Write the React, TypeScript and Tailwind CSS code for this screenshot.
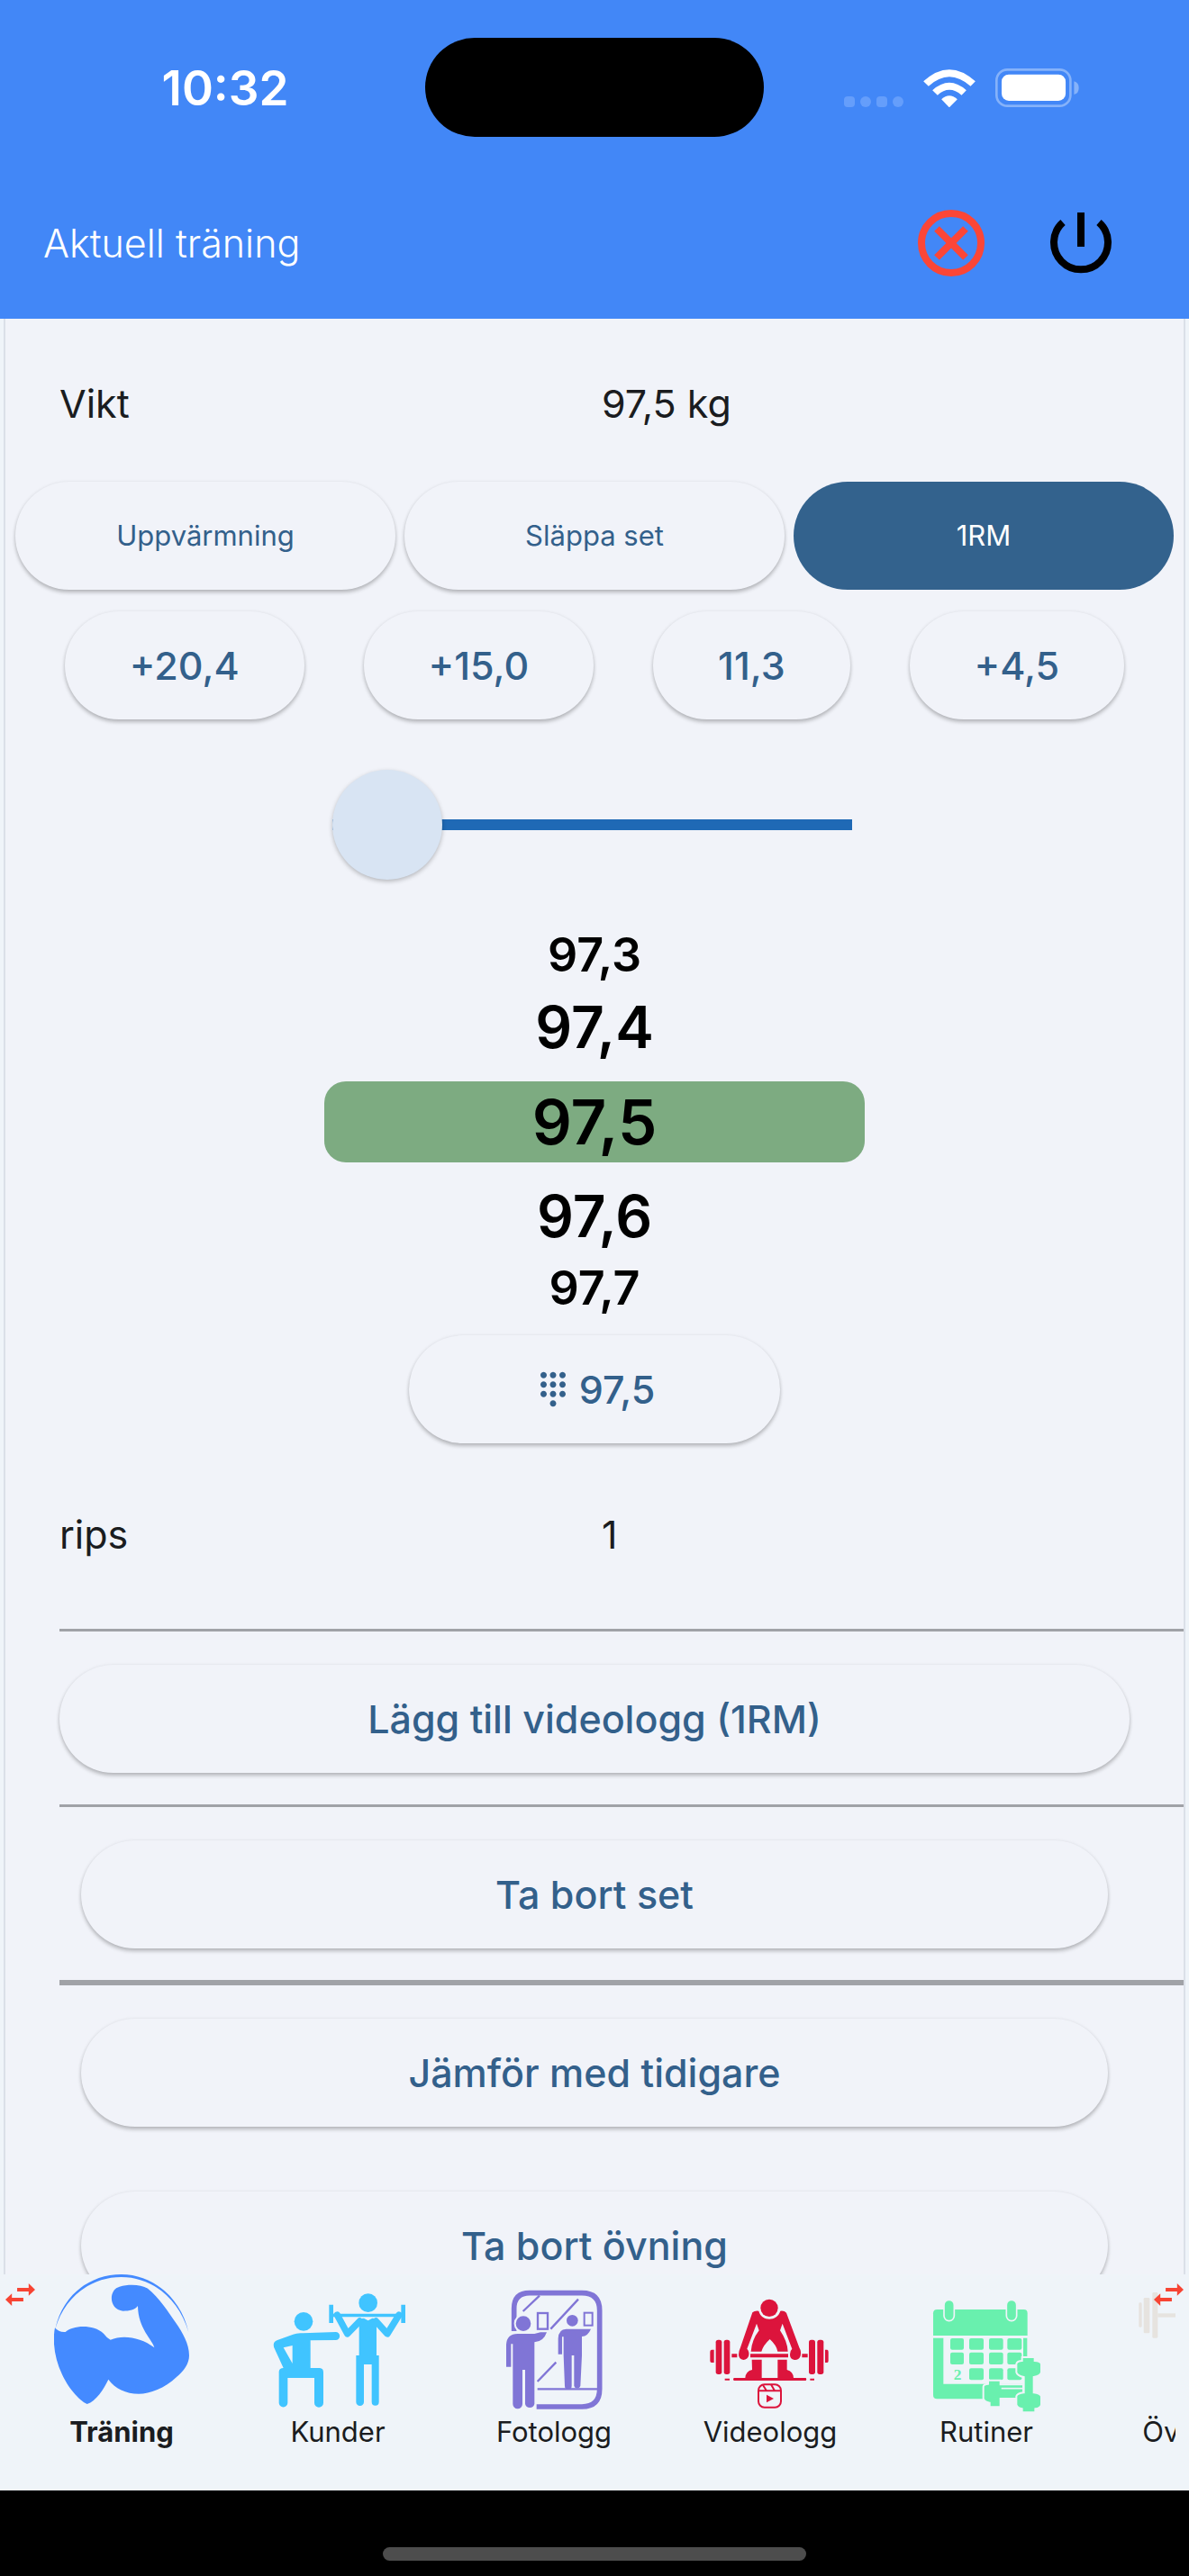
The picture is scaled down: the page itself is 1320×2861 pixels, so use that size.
import React, { useState } from "react";
import clsx from "clsx";
import { MdDialpad } from "react-icons/md";

const WifiIcon = () => (
  <svg viewBox="434 105 173 126" className="h-[42px] w-[58px]" fill="#fff">
    <path d="M434 145 Q520 66 607 145 L591 161 Q520 98 451 161 Z" />
    <path d="M464 175 Q520 124 577 175 L561 191 Q520 156 481 191 Z" />
    <path d="M494 205 Q520 181 547 205 L520 232 Z" />
  </svg>
);

const BatteryIcon = () => (
  <svg viewBox="675 105 280 129" className="h-[43px] w-[93px]">
    <rect x="679" y="109" width="247" height="121" rx="36" fill="none" stroke="#85b2fa" strokeWidth="8" />
    <rect x="696" y="125" width="214" height="88" rx="24" fill="#fff" />
    <path d="M938 148 Q954 152 954 170 Q954 188 938 192 Z" fill="#85b2fa" />
  </svg>
);

const CancelIcon = () => (
  <svg viewBox="0 0 76 76" className="size-[76px]" fill="none" stroke="#fb4637" strokeWidth="8">
    <circle cx="38" cy="38" r="33" />
    <path d="M22 22 L54 54 M54 22 L22 54" />
  </svg>
);

const PowerIcon = () => (
  <svg viewBox="0 0 76 76" className="size-[76px]" fill="none" stroke="#000" strokeWidth="8">
    <path d="M18 15 A30 30 0 1 0 58 15" />
    <path d="M38 4 V42" />
  </svg>
);

const SwapArrowsIcon = () => (
  <svg viewBox="17 137 101 76" className="h-[25px] w-[33px]" fill="#f74433">
    <path d="M57 152 H96 V137 L118 158 L96 179 V164 H57 Z" />
    <path d="M78 186 H39 V171 L17 192 L39 213 V198 H78 Z" />
  </svg>
);

const TrainingIcon = () => (
  <svg viewBox="180 108 450 450" className="size-[150px]" fill="#448aff">
    <path d="M184 290 C208 176 300 108 404 108 C510 108 602 186 628 300 C596 190 508 117 404 117 C302 117 214 184 184 290 Z" />
    <path d="M183 286 Q196 302 218 300 C240 278 310 272 345 305 Q356 320 368 326 C410 308 470 318 514 352 C508 325 460 290 459 213 C450 226 430 230 410 230 C360 225 362 158 398 149 C430 140 470 142 492 155 C530 185 560 232 586 270 C608 302 630 340 630 378 C630 406 612 430 588 450 C548 488 500 506 462 506 C420 506 382 488 361 458 C346 490 320 530 290 540 C262 528 225 482 207 442 C182 390 174 330 183 286 Z" />
  </svg>
);

const ClientsIcon = () => (
  <svg viewBox="900 108 450 450" className="size-[150px]" fill="#40c4ff">
    <circle cx="1011" cy="265" r="31" />
    <path d="M976 308 Q990 302 1010 304 L1118 300 A13 13 0 0 1 1118 327 L1034 328 V420 H1065 Q1077 421 1077 434 V536 A14 14 0 0 1 1047 536 V453 H958 V536 A14 14 0 0 1 929 536 V432 Q930 420 944 420 L912 350 Q908 334 922 328 Z M974 345 L944 352 L974 405 Z" fillRule="evenodd" />
    <circle cx="1226" cy="203" r="31" />
    <path d="M1096 209 H1110 V270 H1096 Z M1336 209 H1350 V270 H1336 Z M1110 239 H1336 V250 H1110 Z" />
    <path d="M1123 243 L1157 306 L1198 264 M1329 243 L1290 306 L1252 264" fill="none" stroke="#40c4ff" strokeWidth="22" strokeLinecap="round" strokeLinejoin="round" />
    <path d="M1188 264 Q1196 255 1212 254 L1226 262 L1240 254 Q1254 255 1260 264 L1254 280 V378 H1262 V533 A12 12 0 0 1 1238 533 V408 H1212 V533 A12 12 0 0 1 1186 533 V378 H1196 V280 Z" />
  </svg>
);

const PhotoLogIcon = () => (
  <svg viewBox="120 108 450 450" className="size-[150px]" fill="#8075d6">
    <path d="M212 297 V222 Q212 170 264 170 H438 Q497 170 497 228 V490 Q497 549 438 549 H287" fill="none" stroke="#8075d6" strokeWidth="17" />
    <path d="M242 231 L297 179 M334 290 L426 191 M290 465 L352 401 M290 490 H490" fill="none" stroke="#8075d6" strokeWidth="7" />
    <circle cx="243" cy="272" r="28" stroke="#eff4f9" strokeWidth="6" />
    <path d="M186 416 V342 Q188 306 224 306 H280 L300 301 L321 301 Q310 333 280 334 V540 A16 16 0 0 1 249 540 V426 H240 V540 A16 16 0 0 1 208 540 V340 H202 V416 Z" />
    <rect x="291" y="237" width="33" height="53" fill="none" stroke="#8075d6" strokeWidth="7" />
    <circle cx="406" cy="262" r="19" />
    <path d="M359 374 V322 Q360 290 386 290 H468 Q458 314 438 315 V378 L433 480 A11 11 0 0 1 412 480 V378 H404 V480 A11 11 0 0 1 381 480 L377 378 V316 H372 V374 Z" />
    <rect x="446" y="236" width="27" height="42" fill="none" stroke="#8075d6" strokeWidth="6" />
  </svg>
);

const VideoLogIcon = () => (
  <svg viewBox="840 108 450 450" className="size-[150px]" fill="#dc143c">
    <circle cx="1062" cy="220" r="29" />
    <path d="M1006 235 Q1014 228 1027 230 C1036 266 1088 266 1099 230 Q1112 228 1119 236 L1162 352 Q1170 366 1166 380 Q1160 394 1146 393 Q1130 390 1131 374 Q1131 362 1138 356 L1106 272 L1098 295 Q1122 330 1124 365 H1090 Q1086 344 1064 324 Q1042 344 1036 365 H1001 Q1004 326 1028 295 L1020 272 L988 356 Q996 364 994 378 Q990 392 976 393 Q960 390 960 376 Q960 364 966 352 Z" />
    <path d="M999 373 H1125 V385 H999 Z M937 373 H955 V385 H937 Z M1171 373 H1190 V385 H1171 Z" />
    <rect x="884" y="326" width="20" height="115" rx="8" />
    <rect x="911" y="326" width="20" height="115" rx="8" />
    <rect x="1194" y="326" width="21" height="115" rx="8" />
    <rect x="1222" y="326" width="21" height="115" rx="8" />
    <path d="M878 359 H870 Q865 360 865 366 V396 Q865 402 870 402 H878 Z M1248 359 H1255 Q1259 360 1259 366 V396 Q1259 402 1255 402 H1248 Z" />
    <path d="M1004 392 H1037 V453 H1090 V392 H1121 V426 Q1142 432 1143 453 H1184 Q1188 458 1184 462 H944 Q940 457 944 453 H982 Q984 430 1005 426 Z" />
    <path d="M914 455 H930 V461 H914 Z M1198 455 H1212 V461 H1198 Z" />
    <rect x="1026" y="475" width="75" height="76" rx="20" fill="none" stroke="#dc143c" strokeWidth="6" />
    <path d="M1026 496 H1101 M1041 477 L1053 496 M1068 475 L1080 496" fill="none" stroke="#dc143c" strokeWidth="6" />
    <path d="M1053 509 L1077 522 L1053 535 Z" />
  </svg>
);

const RoutinesIcon = () => (
  <svg viewBox="180 108 450 450" className="size-[150px] overflow-visible" fill="#69f0ae">
    <path d="M228 238 Q228 225 241 225 H530 Q542 225 542 238 V312 H228 Z" />
    <path d="M228 320 H262 V473 H542 V523 H241 Q228 523 228 510 Z M528 320 H541 V400 H528 Z" />
    <rect x="264" y="193" width="34" height="70" rx="17" stroke="#eff4f9" strokeWidth="5" />
    <rect x="472" y="193" width="34" height="70" rx="17" stroke="#eff4f9" strokeWidth="5" />
    <rect x="285" y="321" width="45" height="38" rx="6" />
    <rect x="348" y="321" width="48" height="38" rx="6" />
    <rect x="414" y="321" width="47" height="38" rx="6" />
    <rect x="475" y="321" width="48" height="38" rx="6" />
    <rect x="285" y="368" width="45" height="40" rx="6" />
    <rect x="348" y="368" width="48" height="40" rx="6" />
    <rect x="414" y="368" width="47" height="40" rx="6" />
    <rect x="475" y="368" width="48" height="40" rx="6" />
    <rect x="348" y="421" width="48" height="39" rx="6" />
    <rect x="414" y="421" width="47" height="39" rx="6" />
    <rect x="475" y="421" width="48" height="39" rx="6" />
    <text x="296" y="460" fontSize="52" fontWeight="700" className="font-['Liberation_Serif',serif]">2</text>
    <path d="M395 482 Q395 474 411 473 V461 H452 V475 H528 V522 H452 V550 H416 V536 Q398 532 395 522 Z" stroke="#eff4f9" strokeWidth="6" />
    <path d="M455 488 H528" stroke="#eff4f9" strokeWidth="5" />
    <path d="M524 384 H566 V396 Q584 396 588 406 V434 Q586 446 563 450 V502 Q584 504 588 514 V542 Q586 554 568 556 V568 H524 V556 Q508 552 505 542 V514 Q508 504 530 502 V450 Q508 446 505 434 V406 Q508 396 524 396 Z" stroke="#eff4f9" strokeWidth="6" />
  </svg>
);

const ExercisesIcon = () => (
  <svg viewBox="900 108 450 450" className="size-[150px]" fill="#e6e3df">
    <rect x="913" y="202" width="10" height="82" rx="4" />
    <rect x="929" y="186" width="20" height="118" rx="4" />
    <rect x="958" y="168" width="18" height="152" rx="4" />
    <rect x="976" y="238" width="298" height="13" />
    <rect x="1274" y="168" width="18" height="152" rx="4" />
    <rect x="1301" y="186" width="20" height="118" rx="4" />
    <rect x="1327" y="202" width="10" height="82" rx="4" />
  </svg>
);

const tabs = [
  { label: "Träning", Icon: TrainingIcon },
  { label: "Kunder", Icon: ClientsIcon },
  { label: "Fotologg", Icon: PhotoLogIcon },
  { label: "Videologg", Icon: VideoLogIcon },
  { label: "Rutiner", Icon: RoutinesIcon },
  { label: "Övningar", Icon: ExercisesIcon },
];

const setTypes = ["Uppvärmning", "Släppa set", "1RM"];
const increments = ["+20,4", "+15,0", "11,3", "+4,5"];

const PillButton: React.FC<React.ButtonHTMLAttributes<HTMLButtonElement> & { filled?: boolean }> = ({
  filled,
  className,
  ...props
}) => (
  <button
    type="button"
    className={clsx(
      "flex h-[120px] shrink-0 items-center justify-center rounded-full whitespace-nowrap",
      filled
        ? "bg-[#33628d] text-white"
        : "bg-[#f1f3f9] text-[#33608b] shadow-[0_3px_4px_rgba(0,0,0,0.24),0_0_4px_rgba(0,0,0,0.06)]",
      className,
    )}
    {...props}
  />
);

const ValueRow: React.FC<{ label: string; value: string; className?: string }> = ({
  label,
  value,
  className,
}) => (
  <dl className={clsx("grid shrink-0 grid-cols-2 gap-x-4 px-[60px] text-[43px] leading-[60px]", className)}>
    <dt>{label}</dt>
    <dd>{value}</dd>
  </dl>
);

const App: React.FC = () => {
  const [setType, setSetType] = useState("1RM");
  const [activeTab, setActiveTab] = useState("Träning");
  const [offset, setOffset] = useState(0);

  return (
    <div className="flex h-screen flex-col overflow-hidden bg-[#eff4f9] font-['Inter',sans-serif] text-[#1a1c20]">
      <header className="shrink-0 bg-[#4287f7] text-white">
        <div className="grid h-[194px] grid-cols-[1fr_376px_1fr] items-center">
          <time className="pt-1 pl-7 text-center text-[53px] font-semibold">10:32</time>
          <div className="h-[110px] rounded-full bg-black" />
          <div className="flex items-end justify-center gap-[22px] pr-[33px]">
            <div className="flex gap-[6px]">
              <span className="size-3 rounded-sm bg-[#659efb]" />
              <span className="size-3 rounded-full bg-[#659efb]" />
              <span className="size-3 rounded-sm bg-[#659efb]" />
              <span className="size-3 rounded-full bg-[#659efb]" />
            </div>
            <WifiIcon />
            <BatteryIcon />
          </div>
        </div>
        <div className="flex h-[160px] items-center justify-between pr-[82px] pb-2 pl-12">
          <h1 className="text-[43px] font-light">Aktuell träning</h1>
          <div className="flex gap-[68px]">
            <button type="button" aria-label="Avbryt">
              <CancelIcon />
            </button>
            <button type="button" aria-label="Avsluta">
              <PowerIcon />
            </button>
          </div>
        </div>
      </header>

      <main className="mx-1 flex min-h-0 flex-1 flex-col overflow-hidden border-x-2 border-[#dbe0e8] bg-[#f1f3f9]">
        <ValueRow label="Vikt" value="97,5 kg" className="pt-16 pb-[57px]" />

        <div className="flex shrink-0 gap-[10px] px-[11px]">
          {setTypes.map((type) => (
            <PillButton
              key={type}
              filled={type === setType}
              onClick={() => setSetType(type)}
              className="flex-1 text-[31px]"
            >
              {type}
            </PillButton>
          ))}
        </div>
        <div className="mt-6 flex shrink-0 justify-evenly">
          {increments.map((step) => (
            <PillButton key={step} className="px-[72px] text-[43px] font-medium">
              {step}
            </PillButton>
          ))}
        </div>

        <div className="mt-14 flex shrink-0 justify-center pr-1.5">
          <input
            type="range"
            aria-label="Vikt"
            min={0}
            max={100}
            value={offset}
            onChange={(e) => setOffset(Number(e.target.value))}
            className="h-[122px] w-[577px] appearance-none bg-transparent bg-[linear-gradient(#1f69b5,#1f69b5)] bg-[length:100%_12px] bg-center bg-no-repeat [&::-webkit-slider-thumb]:size-[122px] [&::-webkit-slider-thumb]:appearance-none [&::-webkit-slider-thumb]:rounded-full [&::-webkit-slider-thumb]:bg-[#d8e4f3] [&::-webkit-slider-thumb]:shadow-[0_2px_5px_rgba(0,0,0,0.25)]"
          />
        </div>

        <ul className="mx-auto mt-11 w-[600px] shrink-0 text-center font-semibold text-black">
          <li className="h-20 text-[52px] leading-[80px]">97,3</li>
          <li className="h-20 text-[64px] leading-[80px]">97,4</li>
          <li className="my-5 h-[90px] rounded-3xl bg-[#7dab81] text-[69px] leading-[90px]">97,5</li>
          <li className="h-20 text-[64px] leading-[80px]">97,6</li>
          <li className="h-20 text-[52px] leading-[80px]">97,7</li>
        </ul>

        <PillButton className="mx-auto mt-3 w-[412px] gap-2 text-[43px] font-medium">
          <MdDialpad className="size-[42px]" />
          97,5
        </PillButton>

        <ValueRow label="rips" value="1" className="pt-[71px] pb-[75px]" />

        <hr className="ml-[60px] shrink-0 border-t-3 border-[#a0a2a7]" />
        <PillButton className="mx-[60px] mt-[37px] mb-[35px] text-[43px] font-medium">
          Lägg till videologg (1RM)
        </PillButton>
        <hr className="ml-[60px] shrink-0 border-t-3 border-[#a0a2a7]" />
        <PillButton className="mx-[84px] mt-[37px] mb-[35px] text-[43px] font-medium">Ta bort set</PillButton>
        <hr className="ml-[60px] shrink-0 border-t-6 border-[#a0a2a7]" />
        <PillButton className="mx-[84px] mt-[37px] mb-[72px] text-[43px] font-medium">
          Jämför med tidigare
        </PillButton>
        <PillButton className="mx-[84px] text-[43px] font-medium">Ta bort övning</PillButton>
      </main>

      <nav className="relative h-[240px] shrink-0 px-[15px]">
        <div className="flex overflow-hidden">
          {tabs.map(({ label, Icon }) => (
            <button
              key={label}
              type="button"
              onClick={() => setActiveTab(label)}
              className={clsx(
                "flex w-[240px] shrink-0 flex-col items-center text-[31px] leading-[50px]",
                label === activeTab && "font-bold",
              )}
            >
              <Icon />
              {label}
            </button>
          ))}
        </div>
        <div className="pointer-events-none absolute inset-x-[6px] top-[10px] flex justify-between">
          <SwapArrowsIcon />
          <SwapArrowsIcon />
        </div>
      </nav>

      <footer className="flex h-[95px] shrink-0 items-end justify-center bg-black pb-[17px]">
        <div className="h-[15px] w-[470px] rounded-full bg-[#4d4d4d]" />
      </footer>
    </div>
  );
};

export default App;
